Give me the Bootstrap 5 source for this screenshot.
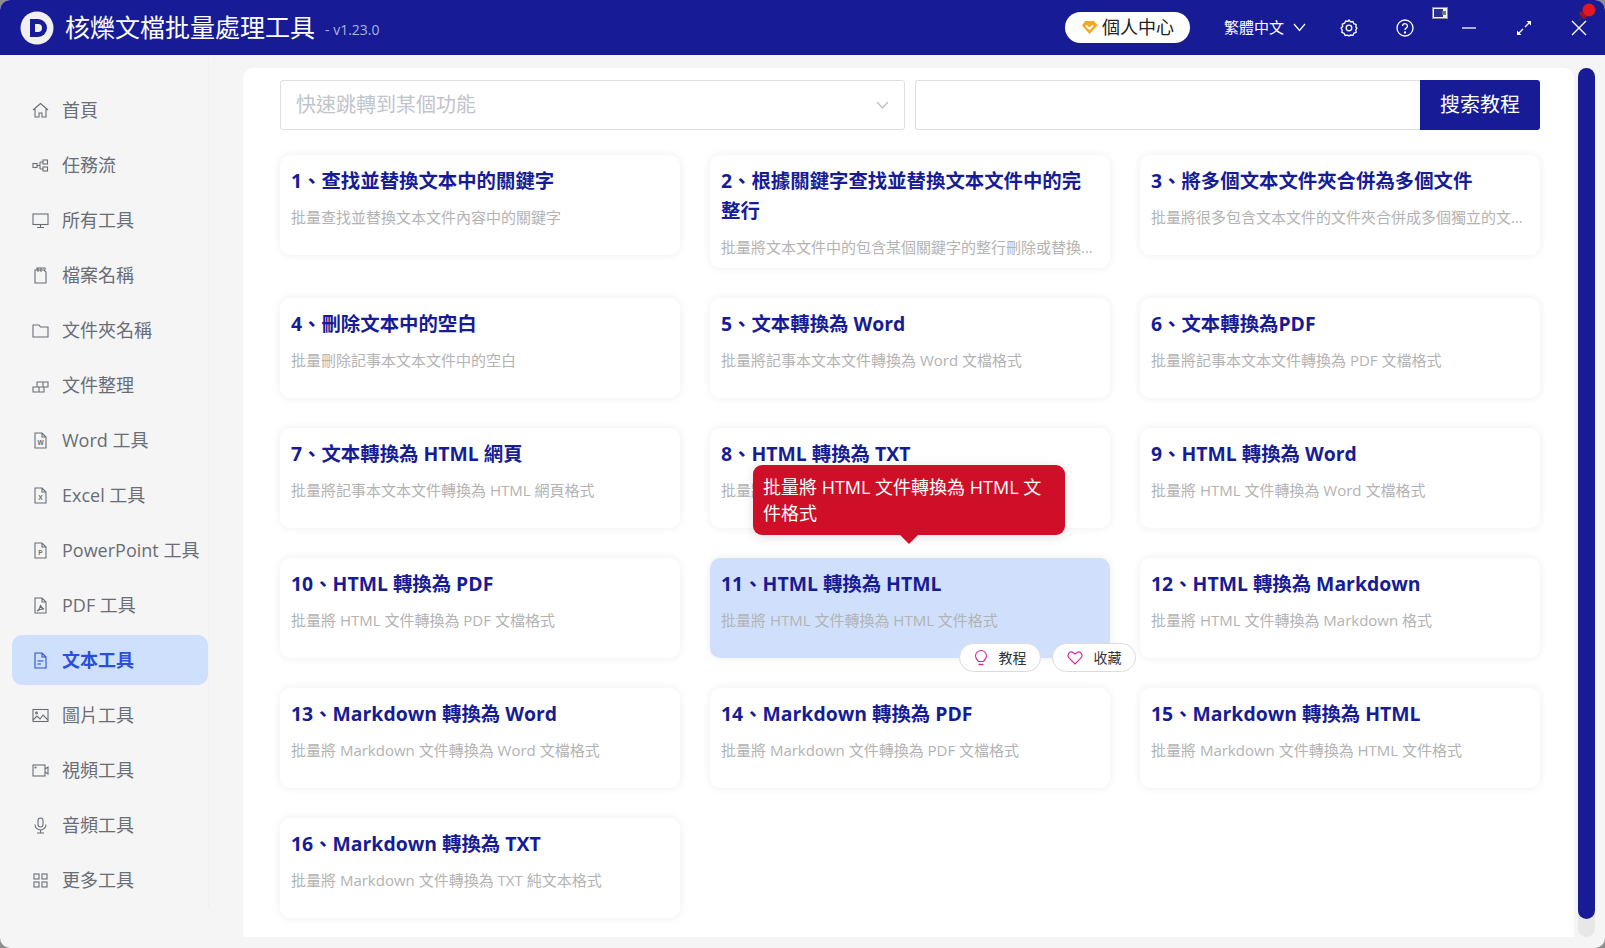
<!DOCTYPE html>
<html lang="zh-Hant">
<head>
  <meta charset="UTF-8">
  <title>核爍文檔批量處理工具</title>
  <link href="https://cdn.jsdelivr.net/npm/bootstrap@5.3.2/dist/css/bootstrap.min.css" rel="stylesheet">
  <style>
    html, body { height: 100%; }
    body {
      background: #8d8d8d;
      font-family: "Open Sans", "Noto Sans CJK TC", sans-serif;
      overflow: hidden;
    }
    .app-window { height: 100vh; background: #f5f5f5; border-radius: 10px; overflow: hidden; }
    .top-bar { height: 55px; background: #171c96; color: #fff; flex: none; position: relative; }
    .app-logo { width: 34px; height: 34px; margin-left: 20px; flex: none; }
    .app-name { font-size: 25px; margin-left: 11px; line-height: 1; }
    .app-version { font-size: 14px; color: #a9b5de; margin-left: 10px; margin-top: 3px; }
    .vip-pill { width: 125px; height: 31px; background: #fff; color: #222; border-radius: 16px; font-size: 18px; margin-right: 34px; }
    .lang-pick { font-size: 15px; width: 82px; margin-right: 33px; }
    .bar-btn { width: 20px; height: 20px; flex: none; }
    .gap-help { margin-left: 36px; }
    .gap-min { margin-left: 44px; }
    .gap-exp { margin-left: 35px; }
    .gap-close { margin-left: 35px; margin-right: 16px; }
    .tray-mark { position: absolute; left: 1432px; top: 7px; }
    .pin-mark { position: absolute; left: 1576px; top: 2px; }

    .side-menu { width: 209px; flex: none; padding: 30px 0 0 12px; height: 853px; border-right: 1px solid #f0f0f0; margin-top: 0; }
    .menu-row { height: 50px; margin-bottom: 5px; border-radius: 10px; color: #686d76; font-size: 18px; padding-left: 20px; width: 196px; }
    .menu-row svg { width: 17px; height: 17px; flex: none; margin-right: 13px; }
    .menu-row.is-on { background: #cfe0fd; color: #2b4fd6; font-weight: 700; }

    .work-panel { width: 1331px; margin: 13px 0 11px 34px; background: #fff; border-radius: 10px 10px 0 0; padding: 12px 34px 0 37px; flex: none; }
    .finder { height: 50px; }
    .finder-select { width: 625px; height: 50px; border: 1px solid #dcdfe6; border-radius: 3px; color: #c0c4cc; font-size: 20px; padding: 0 15px; flex: none; }
    .finder-input { flex: 1; height: 50px; margin-left: 10px; border: 1px solid #dcdfe6; border-right: 0; border-radius: 3px 0 0 3px; box-shadow: none; }
    .finder-btn { width: 120px; height: 50px; background: #171c96; color: #fff; border: 0; border-radius: 0 3px 3px 0; font-size: 20px; flex: none; }

    .tool-grid { --bs-gutter-x: 30px; --bs-gutter-y: 30px; margin-top: -5px; }
    .tool-card { min-height: 100px; padding: 11px 11px 9px; border: 0; border-radius: 10px; box-shadow: 0 0 10px rgba(0, 0, 0, .07); position: relative; }
    .tool-card.is-hover { background: #d0e0fc; }
    .tool-title { font-size: 19.4px; line-height: 30px; font-weight: 700; color: #171c96; margin-bottom: 9px; }
    .tool-desc { font-size: 15px; line-height: 24px; color: #b3b3b3; white-space: nowrap; overflow: hidden; text-overflow: ellipsis; }

    .tip-box { position: absolute; left: 43px; top: -93px; width: 312px; height: 70px; padding: 9px 10px; background: #cf0f27; color: #fff; border-radius: 9px; font-size: 18px; line-height: 26px; z-index: 5; box-shadow: 0 2px 12px rgba(0, 0, 0, .12); }
    .tip-box::after { content: ""; position: absolute; left: 147px; bottom: -9px; border: 9px solid transparent; border-top-color: #cf0f27; border-bottom: 0; }
    .float-pill { position: absolute; top: 85px; height: 29px; background: #fff; border: 1px solid #dcdcdc; border-radius: 15px; font-size: 14px; color: #333; }
    .float-pill svg { margin-right: 11px; }
    .pill-guide { left: 249px; width: 82px; }
    .pill-fav { left: 342px; width: 84px; }

    .fake-scroll { position: absolute; left: 1578px; top: 68px; width: 17px; height: 869px; background: #e7e7e7; border-radius: 9px; }
    .fake-scroll div { height: 851px; margin-top: 0; background: #171c96; border-radius: 9px; }
  </style>
</head>
<body>
  <div class="app-window d-flex flex-column position-relative">
    <header class="top-bar d-flex align-items-center">
      <svg class="app-logo" viewBox="0 0 34 34">
        <circle cx="17" cy="17" r="16.5" fill="#f1eff0"/>
        <path d="M10 8h8a9 9 0 0 1 0 18h-8z" fill="#171c96"/>
        <path d="M15 13h3a4 4 0 0 1 0 8h-3z" fill="#f1eff0"/>
      </svg>
      <div class="app-name">核爍文檔批量處理工具</div>
      <div class="app-version">- v1.23.0</div>
      <div class="ms-auto d-flex align-items-center">
        <div class="vip-pill d-flex align-items-center justify-content-center gap-1">
          <svg width="17" height="15" viewBox="0 0 17 15"><path d="M4 1h9l3.500 4.500L8.500 14 1 5.500z" fill="#f5a623"/><path d="M5 5.500l3.500 3.500L12 5.500" fill="none" stroke="#fff" stroke-width="1.800"/></svg>
          <span>個人中心</span>
        </div>
        <div class="lang-pick d-flex align-items-center justify-content-between">
          <span>繁體中文</span>
          <svg width="13" height="9" viewBox="0 0 13 9"><path d="M1 1l5.500 6.500L12 1" fill="none" stroke="#fff" stroke-width="1.200"/></svg>
        </div>
        <svg class="bar-btn" viewBox="0 0 20 20" fill="none" stroke="#fff" stroke-width="1.300"><path d="M10 2l1.500 1.900 2.400-.4 1 2.200 2.300.9-.4 2.400L18 10l-1.200 1.900.4 2.400-2.300.9-1 2.200-2.400-.4L10 18l-1.500-.9-2.400.4-1-2.200-2.300-.9.4-2.400L2 10l1.700-1.500-.4-2.400 2.300-.9 1-2.200 2.400.4z" stroke-linejoin="round"/><circle cx="10" cy="10" r="2.800"/></svg>
        <svg class="bar-btn gap-help" viewBox="0 0 20 20" fill="none" stroke="#fff" stroke-width="1.300"><circle cx="10" cy="10" r="8"/><path d="M7.600 8a2.400 2.400 0 1 1 3.600 2.100c-.8.5-1.200 1-1.200 2"/><circle cx="10" cy="14.500" r=".5" fill="#fff"/></svg>
        <svg class="bar-btn gap-min" viewBox="0 0 20 20"><path d="M3 10h14" stroke="#fff" stroke-width="1.300"/></svg>
        <svg class="bar-btn gap-exp" viewBox="0 0 20 20"><path d="M11 9l5-5M4 16l5-5" stroke="#fff" stroke-width="1.300"/><path d="M12.500 3h4.500v4.500zM3 12.500V17h4.500z" fill="#fff"/></svg>
        <svg class="bar-btn gap-close" viewBox="0 0 20 20"><path d="M3 3l14 14M17 3L3 17" stroke="#fff" stroke-width="1.400"/></svg>
      </div>
      <svg class="tray-mark" width="16" height="12" viewBox="0 0 16 12"><rect width="16" height="12" fill="#8e8e96"/><rect x="1" y="1" width="14" height="10" fill="#f2f2f2"/><rect x="2" y="2" width="9" height="8" fill="#2a3097"/><rect x="10" y="4" width="4" height="4" fill="#777"/></svg>
      <svg class="pin-mark" width="22" height="22" viewBox="0 0 22 22"><circle cx="13" cy="8" r="6.500" fill="#e0181f"/><path d="M5 9l6 6-3 2-5-5z" fill="#a81218"/><path d="M6 15l-4 5" stroke="#333" stroke-width="1.300"/></svg>
    </header>

    <div class="d-flex flex-grow-1">
      <nav class="side-menu" id="sideMenu"></nav>
      <main class="work-panel">
        <div class="finder d-flex">
          <div class="finder-select d-flex align-items-center justify-content-between">
            <span>快速跳轉到某個功能</span>
            <svg width="13" height="8" viewBox="0 0 13 8"><path d="M1 1l5.500 6L12 1" fill="none" stroke="#b9bdc6" stroke-width="1.200"/></svg>
          </div>
          <input class="finder-input form-control" type="text">
          <button class="finder-btn btn" type="button">搜索教程</button>
        </div>
        <div class="tool-grid row row-cols-3 align-items-start pt-0" id="toolGrid"></div>
      </main>
    </div>
    <div class="fake-scroll"><div></div></div>
  </div>

  <script src="https://cdn.jsdelivr.net/npm/bootstrap@5.3.2/dist/js/bootstrap.bundle.min.js"></script>
  <script>
    const doc = 'M3 1h7l4 4v11H3z M10 1v4h4';
    const fileIcon = mark => `<svg viewBox="0 0 17 17" fill="none" stroke="currentColor" stroke-width="1.100"><path d="${doc}"/><text x="8.500" y="13" font-size="6.500" font-family="Liberation Sans" font-weight="700" text-anchor="middle" fill="currentColor" stroke="none">${mark}</text></svg>`;
    const line = d => `<svg viewBox="0 0 17 17" fill="none" stroke="currentColor" stroke-width="1.100">${d}</svg>`;
    const menu = [
      ['首頁', line('<path d="M1 8l7.500-6.500L16 8M3 6.500V15h4v-4h3v4h4V6.500"/>')],
      ['任務流', line('<rect x="1" y="6.500" width="4" height="4"/><rect x="11" y="3" width="4.500" height="4"/><rect x="11" y="10" width="4.500" height="4"/><path d="M5 8.500h3M8 5v7M8 5h3M8 12h3"/>')],
      ['所有工具', line('<rect x="1" y="2" width="15" height="10.500"/><path d="M8.500 12.500V15M5 15.500h7"/>')],
      ['檔案名稱', line('<path d="M5 3h7l2 2v11H3V3h2zM5 3V1h8v2"/><path d="M6 1v4M9 1v4"/>')],
      ['文件夾名稱', line('<path d="M1 3h6l1.500 2H16v10H1z"/>')],
      ['文件整理', line('<path d="M1 10h6v5H1zM7 10h5v5H7zM5 10V5h6v5M11 5h5v5h-4"/>')],
      ['Word 工具', fileIcon('W')],
      ['Excel 工具', fileIcon('X')],
      ['PowerPoint 工具', fileIcon('P')],
      ['PDF 工具', line(`<path d="${doc}"/><path d="M5 14c2-1 3-3 3.500-6 .5 2 1.500 3.500 3.500 4-2 0-5 .5-7 2z"/>`)],
      ['文本工具', line(`<path d="${doc}"/><path d="M5.500 9h6" stroke="#2b4fd6"/><path d="M5.500 12h3.500"/>`), true],
      ['圖片工具', line('<rect x="1" y="2.500" width="15" height="12"/><circle cx="4.500" cy="6" r=".9"/><path d="M1 13l4-4 3 3 3-4 5 5"/>')],
      ['視頻工具', line('<rect x="1" y="3" width="12" height="11"/><path d="M13 7l3-2v7l-3-2"/><circle cx="3.500" cy="5.500" r=".5"/>')],
      ['音頻工具', line('<rect x="6" y="1" width="5" height="9" rx="2.500"/><path d="M3 7.500a5.500 5.500 0 0 0 11 0M8.500 13v3M5 16h7"/>')],
      ['更多工具', line('<rect x="2" y="2" width="5" height="5"/><rect x="10" y="2" width="5" height="5"/><rect x="2" y="10" width="5" height="5"/><rect x="10" y="10" width="5" height="5"/>')]
    ];
    document.getElementById('sideMenu').innerHTML = menu.map(m =>
      `<div class="menu-row d-flex align-items-center ${m[2] ? 'is-on' : ''}">${m[1]}<span>${m[0]}</span></div>`).join('');

    const tools = [
      ['1、查找並替換文本中的關鍵字', '批量查找並替換文本文件內容中的關鍵字'],
      ['2、根據關鍵字查找並替換文本文件中的完整行', '批量將文本文件中的包含某個關鍵字的整行刪除或替換成其他內容'],
      ['3、將多個文本文件夾合併為多個文件', '批量將很多包含文本文件的文件夾合併成多個獨立的文本文件'],
      ['4、刪除文本中的空白', '批量刪除記事本文本文件中的空白'],
      ['5、文本轉換為 Word', '批量將記事本文本文件轉換為 Word 文檔格式'],
      ['6、文本轉換為PDF', '批量將記事本文本文件轉換為 PDF 文檔格式'],
      ['7、文本轉換為 HTML 網頁', '批量將記事本文本文件轉換為 HTML 網頁格式'],
      ['8、HTML 轉換為 TXT', '批量將 HTML 文件轉換為 TXT 文本格式'],
      ['9、HTML 轉換為 Word', '批量將 HTML 文件轉換為 Word 文檔格式'],
      ['10、HTML 轉換為 PDF', '批量將 HTML 文件轉換為 PDF 文檔格式'],
      ['11、HTML 轉換為 HTML', '批量將 HTML 文件轉換為 HTML 文件格式'],
      ['12、HTML 轉換為 Markdown', '批量將 HTML 文件轉換為 Markdown 格式'],
      ['13、Markdown 轉換為 Word', '批量將 Markdown 文件轉換為 Word 文檔格式'],
      ['14、Markdown 轉換為 PDF', '批量將 Markdown 文件轉換為 PDF 文檔格式'],
      ['15、Markdown 轉換為 HTML', '批量將 Markdown 文件轉換為 HTML 文件格式'],
      ['16、Markdown 轉換為 TXT', '批量將 Markdown 文件轉換為 TXT 純文本格式']
    ];
    const hoverExtras = `
      <div class="tip-box">批量將 HTML 文件轉換為 HTML 文件格式</div>
      <div class="float-pill pill-guide d-flex align-items-center justify-content-center"><svg width="14" height="18" viewBox="0 0 14 18" fill="none" stroke="#d6249f" stroke-width="1.100"><path d="M4.500 12.500C3 11 1.500 9.500 1.500 7a5.500 5.500 0 0 1 11 0c0 2.500-1.500 4-3 5.500z"/><path d="M4.500 15.500h5" stroke-width="1.500"/></svg>教程</div>
      <div class="float-pill pill-fav d-flex align-items-center justify-content-center"><svg width="16" height="14" viewBox="0 0 16 14" fill="none" stroke="#d6249f" stroke-width="1.100"><path d="M8 13L2 7C-.5 4 2.500-.5 6 1.500L8 3l2-1.500C13.500-.5 16.500 4 14 7z"/></svg>收藏</div>`;
    document.getElementById('toolGrid').innerHTML = tools.map((t, i) => `
      <div class="col">
        <div class="card tool-card ${i === 10 ? 'is-hover' : ''}">
          <div class="tool-title">${t[0]}</div>
          <div class="tool-desc">${t[1]}</div>
          ${i === 10 ? hoverExtras : ''}
        </div>
      </div>`).join('');
  </script>
</body>
</html>
